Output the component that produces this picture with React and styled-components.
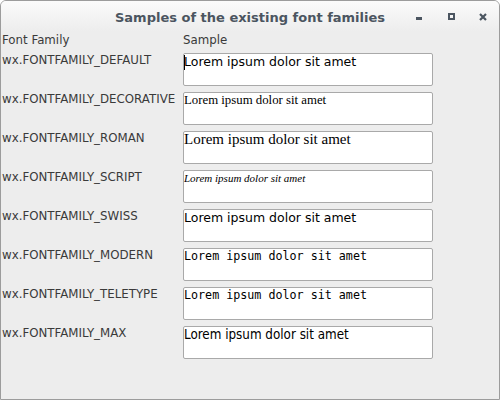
import React from "react";
import styled, { createGlobalStyle } from "styled-components";

const GlobalStyle = createGlobalStyle`
  html, body {
    margin: 0;
    padding: 0;
    width: 500px;
    height: 400px;
    overflow: hidden;
    background: #ffffff;
  }
`;

const families = [
  { label: "wx.FONTFAMILY_DEFAULT", kind: "default", caret: true },
  { label: "wx.FONTFAMILY_DECORATIVE", kind: "decorative" },
  { label: "wx.FONTFAMILY_ROMAN", kind: "roman" },
  { label: "wx.FONTFAMILY_SCRIPT", kind: "script" },
  { label: "wx.FONTFAMILY_SWISS", kind: "swiss" },
  { label: "wx.FONTFAMILY_MODERN", kind: "modern" },
  { label: "wx.FONTFAMILY_TELETYPE", kind: "teletype" },
  { label: "wx.FONTFAMILY_MAX", kind: "max" },
];

const sampleFonts = {
  default: `font-family: "DejaVu Sans", sans-serif; font-size: 12.5px;`,
  decorative: `font-family: "Liberation Serif", serif; font-size: 12.8px;`,
  roman: `font-family: "Liberation Serif", serif; font-size: 15px;`,
  script: `font-family: "Liberation Serif", serif; font-style: italic; font-size: 11px;`,
  swiss: `font-family: "DejaVu Sans", sans-serif; font-size: 12.5px;`,
  modern: `font-family: "DejaVu Sans Mono", monospace; font-size: 11.7px;`,
  teletype: `font-family: "DejaVu Sans Mono", monospace; font-size: 11.7px;`,
  max: `font-family: "DejaVu Sans Condensed", "DejaVu Sans", sans-serif; font-stretch: condensed; font-size: 13.3px;`,
};

function WindowButtons() {
  return (
    <Controls>
      <CtrlButton>
        <svg width="6" height="6" viewBox="0 0 6 6">
          <rect x="0" y="3" width="6" height="3" fill="#4b5560" />
        </svg>
      </CtrlButton>
      <CtrlButton>
        <svg width="7" height="7" viewBox="0 0 7 7">
          <rect x="1" y="1" width="5" height="5" fill="none" stroke="#4b5560" strokeWidth="2" />
        </svg>
      </CtrlButton>
      <CtrlButton>
        <svg width="8" height="8" viewBox="0 0 8 8">
          <path d="M1 1 L7 7 M7 1 L1 7" stroke="#4b5560" strokeWidth="2.2" />
        </svg>
      </CtrlButton>
    </Controls>
  );
}

export default function App() {
  return (
    <>
      <GlobalStyle />
      <Window>
        <TitleBar>
          <span />
          <Title>Samples of the existing font families</Title>
          <WindowButtons />
        </TitleBar>
        <Content>
          <HeaderLabel>Font Family</HeaderLabel>
          <HeaderLabel>Sample</HeaderLabel>
          {families.map((f) => (
            <React.Fragment key={f.label}>
              <FamilyLabel>{f.label}</FamilyLabel>
              <SampleBox>
                <SampleText $kind={f.kind}>
                  {f.caret && <Caret />}
                  Lorem ipsum dolor sit amet
                </SampleText>
              </SampleBox>
            </React.Fragment>
          ))}
        </Content>
      </Window>
    </>
  );
}

const Window = styled.div`
  box-sizing: border-box;
  width: 500px;
  height: 400px;
  border: 1px solid #9c9c9c;
  border-radius: 6px 6px 0 0;
  background: #ededed;
  display: flex;
  flex-direction: column;
  overflow: hidden;
`;

const TitleBar = styled.div`
  height: 30px;
  flex: none;
  display: grid;
  grid-template-columns: 1fr auto 1fr;
  align-items: center;
  background: linear-gradient(#fbfbfb, #ededed);
`;

const Title = styled.div`
  font-family: "DejaVu Sans", sans-serif;
  font-weight: bold;
  font-size: 13px;
  color: #4b5560;
  padding-top: 2px;
`;

const Controls = styled.div`
  justify-self: end;
  display: flex;
  align-items: center;
  padding-top: 1px;
`;

const CtrlButton = styled.div`
  width: 32px;
  height: 20px;
  display: flex;
  align-items: center;
  justify-content: center;
`;

const Content = styled.div`
  display: grid;
  grid-template-columns: 181px 250px;
  grid-auto-rows: 33px;
  grid-template-rows: 16px;
  row-gap: 6px;
  padding: 0 0 0 1px;
  align-items: start;
`;

const labelFont = `
  font-family: "DejaVu Sans", sans-serif;
  font-size: 11.8px;
  color: #3a3a3a;
  line-height: 16px;
`;

const HeaderLabel = styled.div`
  ${labelFont}
  padding-top: 1px;
`;

const FamilyLabel = styled.div`
  ${labelFont}
  white-space: nowrap;
  margin-top: -1px;
`;

const SampleBox = styled.div`
  box-sizing: border-box;
  height: 33px;
  background: #ffffff;
  border: 1px solid #a9a9a9;
  border-radius: 2px;
  overflow: hidden;
`;

const SampleText = styled.div`
  position: relative;
  color: #000000;
  white-space: nowrap;
  line-height: 15px;
  ${(p) => sampleFonts[p.$kind]}
`;

const Caret = styled.span`
  position: absolute;
  left: 0;
  top: 1px;
  width: 1px;
  height: 15px;
  background: #000000;
`;
